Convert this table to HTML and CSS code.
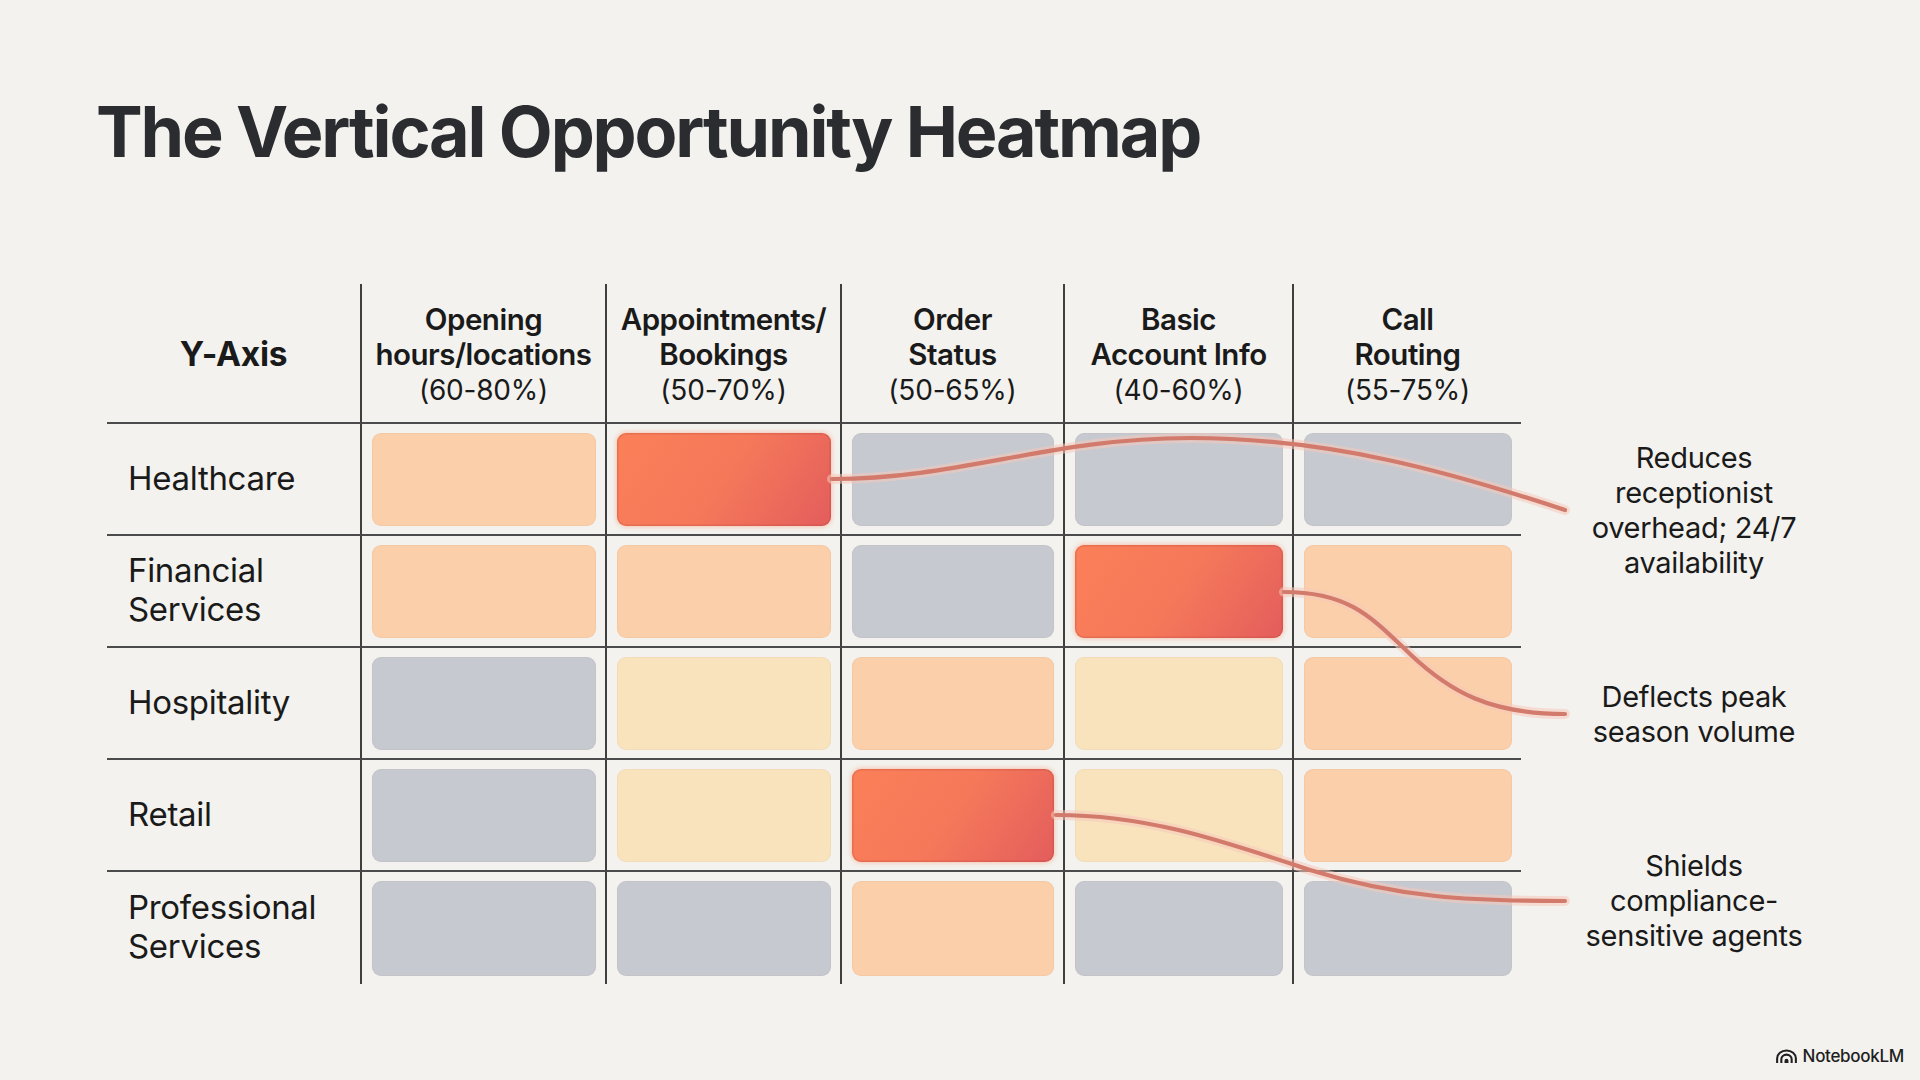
FILE: index.html
```html
<!DOCTYPE html>
<html lang="en">
<head>
<meta charset="utf-8">
<title>The Vertical Opportunity Heatmap</title>
<link rel="stylesheet" href="styles.css">
</head>
<body>
<div class="page">
  <h1 class="title">The Vertical Opportunity Heatmap</h1>

  <div class="main">
    <div class="grid">
      <div class="hd axis">Y-Axis</div>
      <div class="hd col"><span class="hl">Opening</span><span class="hl">hours/locations</span><span class="pct">(60-80%)</span></div>
      <div class="hd col"><span class="hl">Appointments/</span><span class="hl">Bookings</span><span class="pct">(50-70%)</span></div>
      <div class="hd col"><span class="hl">Order</span><span class="hl">Status</span><span class="pct">(50-65%)</span></div>
      <div class="hd col"><span class="hl">Basic</span><span class="hl">Account Info</span><span class="pct">(40-60%)</span></div>
      <div class="hd col last"><span class="hl">Call</span><span class="hl">Routing</span><span class="pct">(55-75%)</span></div>

      <div class="lab">Healthcare</div>
      <div class="c"><div class="tile peach"></div></div>
      <div class="c"><div class="tile hot"></div></div>
      <div class="c"><div class="tile grey"></div></div>
      <div class="c"><div class="tile grey"></div></div>
      <div class="c last"><div class="tile grey"></div></div>

      <div class="lab">Financial<br>Services</div>
      <div class="c"><div class="tile peach"></div></div>
      <div class="c"><div class="tile peach"></div></div>
      <div class="c"><div class="tile grey"></div></div>
      <div class="c"><div class="tile hot"></div></div>
      <div class="c last"><div class="tile peach"></div></div>

      <div class="lab">Hospitality</div>
      <div class="c"><div class="tile grey"></div></div>
      <div class="c"><div class="tile yellow"></div></div>
      <div class="c"><div class="tile peach"></div></div>
      <div class="c"><div class="tile yellow"></div></div>
      <div class="c last"><div class="tile peach"></div></div>

      <div class="lab">Retail</div>
      <div class="c"><div class="tile grey"></div></div>
      <div class="c"><div class="tile yellow"></div></div>
      <div class="c"><div class="tile hot"></div></div>
      <div class="c"><div class="tile yellow"></div></div>
      <div class="c last"><div class="tile peach"></div></div>

      <div class="lab end">Professional<br>Services</div>
      <div class="c end"><div class="tile grey"></div></div>
      <div class="c end"><div class="tile grey"></div></div>
      <div class="c end"><div class="tile peach"></div></div>
      <div class="c end"><div class="tile grey"></div></div>
      <div class="c end last"><div class="tile grey"></div></div>
    </div>

    <div class="notes">
      <p class="note n1">Reduces<br>receptionist<br>overhead; 24/7<br>availability</p>
      <p class="note n2">Deflects peak<br>season volume</p>
      <p class="note n3">Shields<br>compliance-<br>sensitive agents</p>
    </div>

    <svg class="links" viewBox="0 0 1920 1080" width="1920" height="1080" aria-hidden="true">
      <g class="glow">
        <path d="M832 479 C 960 479, 1050 438, 1190 438 C 1330 438, 1450 472, 1565 510"/>
        <path d="M1284 592 C 1350 592, 1372 618, 1410 654 C 1450 692, 1490 714, 1565 714"/>
        <path d="M1056 815 C 1150 815, 1225 842, 1310 870 C 1400 898, 1470 901, 1565 901"/>
      </g>
      <g class="line">
        <path d="M832 479 C 960 479, 1050 438, 1190 438 C 1330 438, 1450 472, 1565 510"/>
        <path d="M1284 592 C 1350 592, 1372 618, 1410 654 C 1450 692, 1490 714, 1565 714"/>
        <path d="M1056 815 C 1150 815, 1225 842, 1310 870 C 1400 898, 1470 901, 1565 901"/>
      </g>
    </svg>
  </div>

  <footer class="brand">
    <svg class="brand-icon" viewBox="0 0 24 16" width="23" height="15" aria-hidden="true">
      <path d="M2 15 V10 A10 8.5 0 0 1 22 10 V15" />
      <path d="M6.5 15 V11 A5.5 5 0 0 1 17.5 11 V15" />
      <path d="M11 15 V12.5 A1 1 0 0 1 13 12.5 V15" />
    </svg>
    <span>NotebookLM</span>
  </footer>
</div>
</body>
</html>
```

FILE: styles.css
```css
* { box-sizing: border-box; }

html, body {
  margin: 0;
  padding: 0;
}

body {
  background: #f3f2ee;
  color: #1c1c1e;
  font-family: Inter, "Noto Sans", "Liberation Sans", sans-serif;
}

.page {
  width: 1920px;
  height: 1080px;
  display: flex;
  flex-direction: column;
  padding: 90px 0 0 96px;
  position: relative;
}

.title {
  margin: 0;
  font-size: 70px;
  line-height: 84px;
  font-weight: 700;
  letter-spacing: -2.15px;
  color: #2a2c2f;
}

.main {
  margin-top: 110px;
  margin-left: 11px;
  display: flex;
}

.grid {
  display: grid;
  grid-template-columns: 255px 245px 235px 223px 229px 227px;
  grid-template-rows: 140px repeat(5, 112px);
}

.hd, .lab, .c {
  border-bottom: 2px solid #4b4b4b;
  border-right: 2px solid #3f3f3f;
}

.last { border-right: none; }
.end { border-bottom: none; }

.hd {
  display: flex;
  flex-direction: column;
  align-items: center;
  justify-content: center;
  text-align: center;
  font-size: 29.5px;
  line-height: 35.5px;
  color: #1a1a1a;
  padding-top: 4px;
}

.hd .hl {
  font-weight: 600;
  letter-spacing: -0.5px;
}

.hd .pct {
  font-weight: 400;
  font-size: 28px;
  letter-spacing: -0.2px;
}

.axis {
  font-weight: 700;
  font-size: 33.5px;
  letter-spacing: -0.3px;
}

.lab {
  display: flex;
  align-items: center;
  padding-left: 21px;
  padding-bottom: 2px;
  font-size: 33px;
  line-height: 39px;
  font-weight: 400;
  letter-spacing: -0.3px;
  color: #1a1a1a;
}

.c {
  padding: 9px 9px 8px 10px;
  display: flex;
}

.tile {
  flex: 1;
  border-radius: 9px;
  box-shadow: inset 0 0 0 1px rgba(160, 110, 80, 0.06);
}

.peach { background: #fbcfa9; }
.grey { background: #c6c9d0; }
.yellow { background: #f8e3bd; }
.hot {
  background: linear-gradient(125deg, #fb8058 0%, #f5785a 50%, #e35d5c 100%);
  box-shadow: 0 0 4px 1px rgba(250, 160, 130, 0.55), inset 0 0 0 1.5px rgba(170, 60, 50, 0.22);
}

.notes {
  width: 260px;
  margin-left: 43px;
  display: flex;
  flex-direction: column;
}

.note {
  margin: 0;
  text-align: center;
  font-size: 29px;
  line-height: 35px;
  color: #1a1a1a;
  letter-spacing: -0.3px;
}

.n1 { margin-top: 156px; }
.n2 { margin-top: 99px; }
.n3 { margin-top: 99px; }

.links {
  position: absolute;
  left: 0;
  top: 0;
  pointer-events: none;
  overflow: visible;
}

.links path {
  fill: none;
  stroke-linecap: round;
}

.links .glow path {
  stroke: #f5c9b9;
  stroke-width: 10;
  opacity: 0.55;
}

.links .line path {
  stroke: #d27a6b;
  stroke-width: 4.2;
}

.brand {
  margin-top: auto;
  align-self: flex-end;
  display: flex;
  align-items: center;
  gap: 5px;
  padding: 0 16px 14px 0;
  font-size: 17px;
  font-weight: 500;
  letter-spacing: -0.3px;
  color: #1f1f1f;
}

.brand-icon path {
  fill: none;
  stroke: #1f1f1f;
  stroke-width: 2.2;
}
```
